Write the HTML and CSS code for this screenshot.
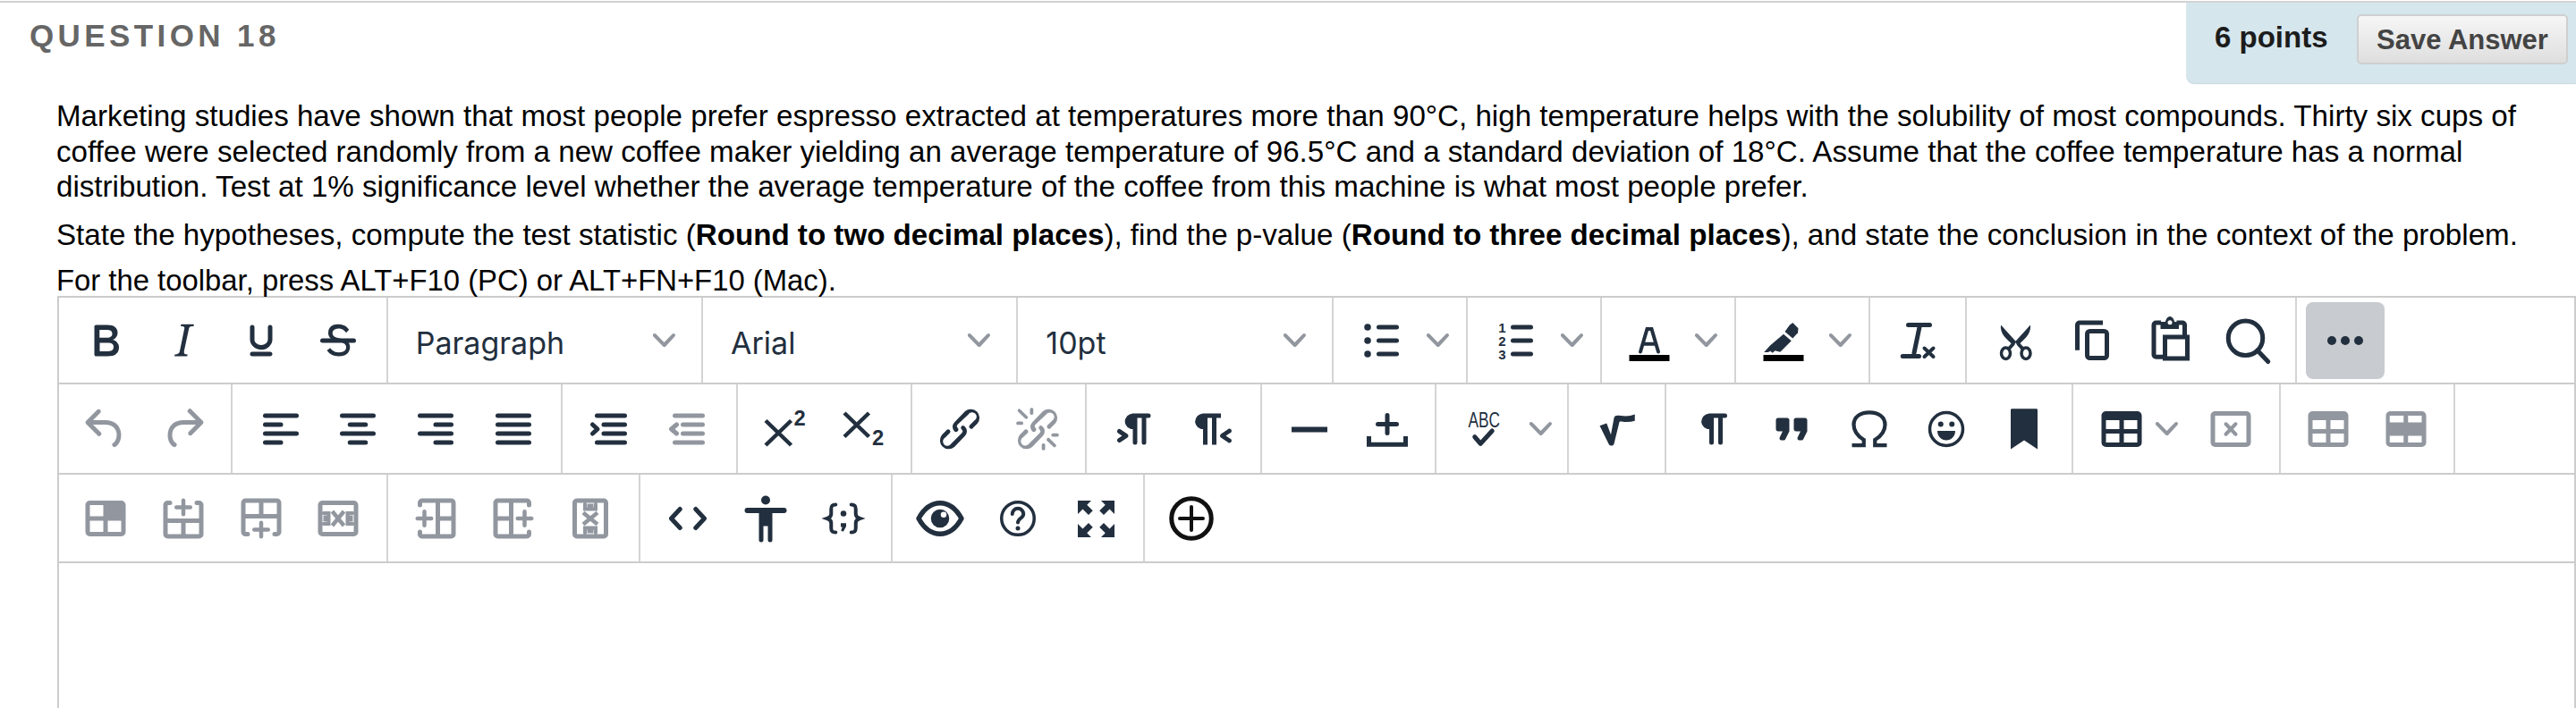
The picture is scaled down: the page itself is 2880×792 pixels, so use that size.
FILE: index.html
```html
<!DOCTYPE html>
<html lang="en">
<head>
  <meta charset="UTF-8">
  <title>Question 18</title>
  <link rel="stylesheet" href="styles.css">
</head>
<body>
  <svg class="defs" xmlns="http://www.w3.org/2000/svg">
    <symbol id="i-bold" viewBox="0 0 24 24"><path d="M7.8 19c-.3 0-.5 0-.6-.2l-.2-.5V5.7c0-.2 0-.4.2-.5l.6-.2h5c1.5 0 2.7.3 3.5 1 .7.6 1.1 1.4 1.1 2.5a3 3 0 01-.6 1.9c-.4.6-1 1-1.6 1.2.4.1.9.3 1.3.6s.8.7 1 1.2c.4.4.5 1 .5 1.6 0 1.3-.4 2.3-1.3 3-.8.7-2.1 1-3.8 1H7.8zm5-8.3c.6 0 1.2-.1 1.6-.5.4-.3.6-.7.6-1.3 0-1.1-.8-1.7-2.3-1.7H9.3v3.5h3.4zm.5 6c.7 0 1.3-.1 1.7-.4.4-.4.6-.9.6-1.5s-.2-1-.7-1.4c-.4-.3-1-.4-2-.4H9.4v3.8h4z" fill-rule="evenodd"/></symbol>
    <symbol id="i-italic" viewBox="0 0 24 24"><path d="M16.7 4.7l-.1.9h-.3c-.6 0-1 0-1.4.3-.3.3-.4.6-.5 1.1l-2.1 9.8v.6c0 .5.4.8 1.4.8h.2l-.2.8H8l.2-.8h.2c1.1 0 1.8-.5 2-1.5l2-9.8.1-.5c0-.6-.4-.8-1.4-.8h-.3l.2-.9h5.8z"/></symbol>
    <symbol id="i-underline" viewBox="0 0 24 24"><path d="M16 5c.6 0 1 .4 1 1v5.5a4 4 0 01-.4 1.8l-1 1.4a5.3 5.3 0 01-5.5 1 5 5 0 01-1.6-1c-.5-.4-.8-.9-1.1-1.4a4 4 0 01-.4-1.8V6c0-.6.4-1 1-1s1 .4 1 1v5.5c0 .3 0 .6.2 1l.6.7a3.3 3.3 0 002.2.8 3.4 3.4 0 002.2-.8c.3-.2.4-.5.6-.8l.2-.9V6c0-.6.4-1 1-1zM8 17h8c.6 0 1 .4 1 1s-.4 1-1 1H8a1 1 0 010-2z"/></symbol>
    <symbol id="i-strike" viewBox="0 0 24 24"><path d="M15.6 8.5c-.5-.7-1-1.1-1.3-1.3-.6-.4-1.3-.6-2-.6-2.7 0-2.8 1.7-2.8 2.1 0 1.6 1.8 2 3.2 2.3 4.4.9 4.6 2.8 4.6 3.9 0 1.4-.7 4.1-5 4.1A6.2 6.2 0 017 16.4l1.5-1.1c.4.6 1.6 2 3.7 2 1.6 0 2.5-.4 3-1 .3-.4.4-.9.4-1.4 0-.8-.4-2-4-2.6C9.6 11.8 7.6 11 7.6 8.6c0-3.8 3.5-3.9 4.5-3.9 1.7 0 3 .6 3.6 1.1l1.2 1.3-1.3 1.4z"/><path d="M5 11h14a1 1 0 010 2H5a1 1 0 010-2z"/></symbol>
    <symbol id="i-chevron" viewBox="0 0 10 10"><path d="M8.7 2.2c.3-.3.8-.3 1 0 .4.4.4.9 0 1.2L5.7 7.8c-.3.3-.9.3-1.2 0L.2 3.4a.8.8 0 010-1.2c.3-.3.8-.3 1.1 0L5 6l3.7-3.8z"/></symbol>
    <symbol id="i-bullist" viewBox="0 0 24 24"><g class="ln"><path d="M11 6h8M11 12h8M11 18h8"/></g><circle cx="6" cy="6" r="1.5"/><circle cx="6" cy="12" r="1.5"/><circle cx="6" cy="18" r="1.5"/></symbol>
    <symbol id="i-textcolor" viewBox="0 0 24 24"><path class="ln-thin" d="M8 17l3-10.200h2l3 10.200M9.100 13.500h5.800"/><rect class="ink" x="3" y="18.400" width="18" height="2.800"/></symbol>
    <symbol id="i-highlight" viewBox="0 0 24 24"><path d="M14.700 5.100l1.400-1.100 2.500 2.500-.2 2-2.300 2.500-3.500-3z"/><path d="M12 9.100l3.500 3-5 5-2.300-.6-1.100 1-1-.8-1 .5H3.300l2.700-3z"/><rect class="ink" x="3" y="18.400" width="18" height="2.800"/></symbol>
    <symbol id="i-removeformat" viewBox="0 0 24 24"><path class="ln" d="M7.800 5h9.600M13 5l-2.600 12.500M5.300 19h7.300"/><path class="ln-thin" d="M15 15.400l4 3.800M19 15.400l-4 3.800"/></symbol>
    <symbol id="i-cut" viewBox="0 0 24 24"><path d="M5.600 5l6.900 7.600-1.400 1.500C8.400 11.500 5 9 5.600 5zM18.800 5c.5 4-2.800 6.500-5.500 9.100l-1.400-1.500z"/><path class="ln-thin" d="M9.300 15.500l1.800-2M15.200 15.500l-1.800-2"/><ellipse class="ring-th" cx="7.800" cy="17.700" rx="2" ry="2.500"/><ellipse class="ring-th" cx="16.800" cy="17.700" rx="2" ry="2.500"/></symbol>
    <symbol id="i-copy" viewBox="0 0 24 24"><path class="ln-sq" d="M16.800 4H6.400a1 1 0 00-1 1v11.300"/><rect class="ring" x="9.800" y="7.800" width="8.800" height="12" rx="1.200"/></symbol>
    <symbol id="i-paste" viewBox="0 0 24 24"><path class="ln-sq" d="M8 4H5.800a1 1 0 00-1 1v13.300a1 1 0 001 1H9M15 4h2.600a1 1 0 011 1v5"/><path d="M7.800 6.800V3.600h2.200c.2-1.600 1.400-2.400 2-2.400s1.800.8 2 2.400h2v3.200z"/><circle class="hole" cx="12" cy="3.900" r="1"/><rect class="ln-sq" x="9.800" y="10.400" width="10" height="9.600"/></symbol>
    <symbol id="i-search" viewBox="0 0 24 24"><circle class="ring" cx="11" cy="10.900" r="7.700"/><path class="ln" d="M16.300 16.400l4.800 5"/></symbol>
    <symbol id="i-more" viewBox="0 0 24 24"><circle cx="6" cy="12" r="2"/><circle cx="12" cy="12" r="2"/><circle cx="18" cy="12" r="2"/></symbol>
    <symbol id="i-undo" viewBox="0 0 24 24"><path d="M6.400 8H12c3.700 0 6.200 2 6.800 5.100.6 2.700-.4 5.600-2.300 6.800a1 1 0 01-1-1.800c1.100-.7 1.800-2.700 1.400-4.600-.5-2.100-2.100-3.500-4.900-3.500H6.400l3.300 3.300a1 1 0 11-1.400 1.400l-5-5a1 1 0 010-1.400l5-5a1 1 0 011.400 1.400L6.400 8z"/></symbol>
    <symbol id="i-redo" viewBox="0 0 24 24"><path d="M17.600 10H12c-2.800 0-4.400 1.400-4.900 3.500-.4 2 .3 3.900 1.400 4.600a1 1 0 11-1 1.800c-2-1.200-2.900-4.100-2.300-6.800.6-3 3-5.100 6.800-5.100h5.600l-3.300-3.300a1 1 0 111.400-1.400l5 5a1 1 0 010 1.400l-5 5a1 1 0 01-1.400-1.400l3.300-3.300z"/></symbol>
    <symbol id="i-alignleft" viewBox="0 0 24 24"><path class="ln" d="M5 6h14M5 10h7M5 14h14M5 18h7"/></symbol>
    <symbol id="i-aligncenter" viewBox="0 0 24 24"><path class="ln" d="M5 6h14M8.500 10h7M5 14h14M8.500 18h7"/></symbol>
    <symbol id="i-alignright" viewBox="0 0 24 24"><path class="ln" d="M5 6h14M12 10h7M5 14h14M12 18h7"/></symbol>
    <symbol id="i-justify" viewBox="0 0 24 24"><path class="ln" d="M5 6h14M5 10h14M5 14h14M5 18h14"/></symbol>
    <symbol id="i-indent" viewBox="0 0 24 24"><path class="ln" d="M6.200 6h12.400M9.200 10h9.400M9.200 14h9.400M6.200 18h12.400M4.200 10l2.200 2-2.200 2"/></symbol>
    <symbol id="i-outdent" viewBox="0 0 24 24"><path class="ln" d="M6.200 6h12.400M9.800 10h8.800M9.800 14h8.800M6.200 18h12.400M7 10l-2.400 2L7 14"/></symbol>
    <symbol id="i-link" viewBox="0 0 24 24"><path d="M6.200 12.300a1 1 0 011.400 1.400l-2 2a2 2 0 102.600 2.800l4.800-4.800a1 1 0 000-1.400 1 1 0 111.400-1.300 2.900 2.900 0 010 4L9.600 20a3.900 3.900 0 01-5.500-5.500l2-2zm11.600-.6a1 1 0 01-1.400-1.400l2-2a2 2 0 10-2.600-2.800L11 10a1 1 0 000 1.400A1 1 0 119.600 13a2.900 2.900 0 010-4L14.400 4a3.900 3.900 0 015.500 5.500l-2 2z"/></symbol>
    <symbol id="i-unlink" viewBox="0 0 24 24"><path d="M6.200 12.300a1 1 0 011.400 1.400l-2.100 2a2 2 0 102.700 2.800l4.800-4.800a1 1 0 000-1.400 1 1 0 111.400-1.300 2.900 2.900 0 010 4L9.600 20a3.900 3.900 0 01-5.500-5.500l2-2zm11.600-.6a1 1 0 01-1.400-1.400l2.100-2a2 2 0 10-2.700-2.800L11 10a1 1 0 000 1.400A1 1 0 119.600 13a2.900 2.900 0 010-4L14.400 4a3.900 3.900 0 015.500 5.500l-2 2zM7.600 6.300a.8.8 0 01-1 1.100L3.300 4.200a.7.7 0 111-1l3.200 3.100zM5.100 8.600a.8.8 0 010 1.500H3a.8.8 0 010-1.500H5zm5-3.500a.8.8 0 01-1.500 0V3a.8.8 0 011.500 0v2zm6 11.800a.8.8 0 011-1l3.200 3.200a.8.8 0 01-1 1L16 17zm-2.200 2a.8.8 0 011.500 0V21a.8.8 0 01-1.500 0V19zm5-3.500a.7.7 0 110-1.500H21a.8.8 0 010 1.500H19z"/></symbol>
    <symbol id="i-ltr" viewBox="0 0 24 24"><path d="M11 5h7a1 1 0 010 2h-1v11a1 1 0 01-2 0V7h-2v11a1 1 0 01-2 0v-6c-.5 0-1 0-1.400-.3A3.400 3.400 0 017.800 10a3.300 3.300 0 010-2.800 3.400 3.400 0 011.800-1.800L11 5zM4.400 16.200L6.200 15l-1.800-1.200a1 1 0 011.200-1.600l3 2a1 1 0 010 1.600l-3 2a1 1 0 11-1.200-1.600z"/></symbol>
    <symbol id="i-rtl" viewBox="0 0 24 24"><path d="M8 5h8v2h-2v12h-2V7h-2v12H8v-7c-.5 0-1 0-1.400-.3A3.400 3.400 0 014.800 10a3.300 3.300 0 010-2.800 3.400 3.400 0 011.800-1.800L8 5zm12 11.200a1 1 0 11-1 1.600l-3-2a1 1 0 010-1.600l3-2a1 1 0 111 1.600L18.200 15l1.800 1.200z"/></symbol>
    <symbol id="i-hr" viewBox="0 0 24 24"><path d="M4 11h16v2.400H4z"/></symbol>
    <symbol id="i-pagebreak" viewBox="0 0 24 24"><path class="ln" d="M12 5.800v8M7.800 9.800h8.400"/><path class="ln-sq" d="M3.800 15.200v3.700h16.400v-3.700"/></symbol>
    <symbol id="i-sqrt" viewBox="0 0 24 24"><path d="M4.200 10.500l3.100-1.100 1.900 5.100 1.400-7.500c.3-1.200 1.400-1.200 2.900-1 2.500.3 4.500.2 6.400-.6v2.900c-1.900.6-3.900.7-5.900.3-.7-.1-1-.1-1.100.6l-2.300 9.400c-.3 1.100-2 1.100-2.400 0z"/></symbol>
    <symbol id="i-para" viewBox="0 0 24 24"><path d="M10 5h7a1 1 0 010 2h-1v11a1 1 0 01-2 0V7h-2v11a1 1 0 01-2 0v-6c-.5 0-1 0-1.400-.3A3.400 3.400 0 016.800 10a3.300 3.300 0 010-2.800 3.400 3.400 0 011.800-1.800L10 5z"/></symbol>
    <symbol id="i-quote" viewBox="0 0 24 24"><path d="M7.500 17h.9c.4 0 .7-.2.9-.6L11 13V8c0-.6-.4-1-1-1H6a1 1 0 00-1 1v4c0 .6.400 1 1 1h2l-1.300 2.700a1 1 0 00.8 1.300zm8 0h.9c.4 0 .7-.2.9-.6L19 13V8c0-.6-.4-1-1-1h-4a1 1 0 00-1 1v4c0 .6.400 1 1 1h2l-1.300 2.700a1 1 0 00.8 1.300z"/></symbol>
    <symbol id="i-omega" viewBox="0 0 24 24"><path class="ln-om" d="M4.200 19.200h5.300v-2.400C6.500 15 5 12.500 5 10c0-3.500 3-5.500 7-5.500s7 2 7 5.500c0 2.500-1.500 5-4.500 6.800v2.400h5.300"/></symbol>
    <symbol id="i-emoji" viewBox="0 0 24 24"><circle class="ring-th" cx="12" cy="12" r="7.400"/><circle cx="9.500" cy="9.800" r="1.200"/><circle cx="14.500" cy="9.800" r="1.200"/><path d="M8 12.800h8c0 2.500-1.800 4.200-4 4.200s-4-1.700-4-4.200z"/></symbol>
    <symbol id="i-bookmark" viewBox="0 0 24 24"><path d="M6 3.500v17.500l6-4 6 4V3.500c0-.4-.200-.6-.6-.6H6.600c-.4 0-.6.200-.6.600z"/></symbol>
    <symbol id="i-table" viewBox="0 0 24 24"><path d="M19 4a2 2 0 012 2v12a2 2 0 01-2 2H5a2 2 0 01-2-2V6c0-1.100.9-2 2-2h14zM5 14v4h6v-4H5zm14 0h-6v4h6v-4zm0-6h-6v4h6V8zM5 12h6V8H5v4z" fill-rule="evenodd"/></symbol>
    <symbol id="i-tabledel" viewBox="0 0 24 24"><path d="M19 4a2 2 0 012 2v12a2 2 0 01-2 2H5a2 2 0 01-2-2V6c0-1.100.9-2 2-2h14zM5 6v12h14V6H5z" fill-rule="evenodd"/><path class="ln-thin" d="M9.800 9.700l4.400 4.600M14.200 9.700l-4.400 4.600"/></symbol>
    <symbol id="i-rowprops" viewBox="0 0 24 24"><path d="M19 4a2 2 0 012 2v12a2 2 0 01-2 2H5a2 2 0 01-2-2V6c0-1.100.9-2 2-2h14zM4.700 15v3h6.200v-3zm8.200 0v3H19v-3zm0-9v3H19V6zM4.700 6v3h6.200V6z" fill-rule="evenodd"/></symbol>
    <symbol id="i-cellprops" viewBox="0 0 24 24"><path d="M19 4a2 2 0 012 2v12a2 2 0 01-2 2H5a2 2 0 01-2-2V6c0-1.100.9-2 2-2h14zM5 13v5h6v-5zm8 0v5h6v-5zM5 6v5h6V6z" fill-rule="evenodd"/></symbol>
    <symbol id="i-rowabove" viewBox="0 0 24 24"><path d="M6 4a1 1 0 110 2H5v6h14V6h-1a1 1 0 010-2h1a2 2 0 012 2v13a2 2 0 01-2 2H5a2 2 0 01-2-2V6c0-1.100.9-2 2-2h1zm5 10H5v5h6v-5zm8 0h-6v5h6v-5zM12 3c.5 0 .9.4.9.9v2.200h2.200a.9.9 0 010 1.800h-2.200v2.200a.9.9 0 01-1.800 0V7.900H8.900a.9.9 0 010-1.800h2.200V3.900c0-.5.4-.9.9-.9z" fill-rule="evenodd"/></symbol>
    <symbol id="i-rowbelow" viewBox="0 0 24 24"><use href="#i-rowabove" width="24" height="24" transform="matrix(1 0 0 -1 0 24)"/></symbol>
    <symbol id="i-rowdel" viewBox="0 0 24 24"><path d="M19 4a2 2 0 012 2v12a2 2 0 01-2 2H5a2 2 0 01-2-2V6c0-1.100.9-2 2-2h14zM5 6v12h14V6H5z" fill-rule="evenodd"/><path class="ln-x" d="M9.400 8.800l5.200 6.400M14.600 8.800l-5.200 6.400"/><path class="ln-thin" d="M5.500 9.600h2.300v1.800H6.200v1.200h1.600v1.800H5.500M18.500 9.600h-2.300v1.800h1.600v1.200h-1.600v1.800h2.300"/></symbol>
    <symbol id="i-colleft" viewBox="0 0 24 24"><use href="#i-rowabove" width="24" height="24" transform="rotate(-90 12 12)"/></symbol>
    <symbol id="i-colright" viewBox="0 0 24 24"><use href="#i-rowabove" width="24" height="24" transform="rotate(90 12 12)"/></symbol>
    <symbol id="i-coldel" viewBox="0 0 24 24"><use href="#i-rowdel" width="24" height="24" transform="rotate(90 12 12)"/></symbol>
    <symbol id="i-code" viewBox="0 0 24 24"><path class="ln" d="M8.500 7.800L4.600 12l3.900 4.200M15.500 7.800l3.900 4.200-3.900 4.200"/></symbol>
    <symbol id="i-a11y" viewBox="0 0 24 24"><path d="M12 1.800a2 2 0 110 4 2 2 0 010-4zM3.800 7.200h16.400a1.200 1.200 0 010 2.400H15v12a1 1 0 01-2 0v-6.200h-2v6.200a1 1 0 01-2 0v-12H3.800a1.200 1.200 0 010-2.400z"/></symbol>
    <symbol id="i-template" viewBox="0 0 24 24"><path class="ln-thin" d="M8.500 5.800c-1.500 0-2 .6-2 2V10c0 1-.6 1.600-1.800 2 1.200.4 1.800 1 1.800 2v2.200c0 1.400.5 2 2 2M15.500 5.800c1.500 0 2 .6 2 2V10c0 1 .6 1.600 1.800 2-1.200.4-1.800 1-1.800 2v2.200c0 1.400-.5 2-2 2"/><circle cx="12" cy="9.800" r="1.300"/><path d="M10.800 14.100h2.400v1.500l-1.300 2.300-1-.5.600-1.600h-.7z"/></symbol>
    <symbol id="i-eye" viewBox="0 0 24 24"><path class="ln-eye" d="M2.400 12C5 7.300 8 5.100 12 5.100s7 2.200 9.600 6.900C19 16.700 16 18.900 12 18.900S5 16.700 2.400 12z"/><circle cx="12" cy="12" r="4.100"/><circle class="hole" cx="13.600" cy="10.300" r="1.300"/></symbol>
    <symbol id="i-help" viewBox="0 0 24 24"><circle class="ring-th" cx="12" cy="12" r="7.300"/><path class="ln-thin" d="M9.500 10a2.500 2.500 0 115 0c0 1.800-2.500 2-2.500 3.800"/><circle cx="12" cy="16.400" r="1"/></symbol>
    <symbol id="i-fullscreen" viewBox="0 0 24 24"><g id="fs-corner"><path d="M4 4h6L8.100 5.900l2.600 2.600-1.900 1.900-2.600-2.600L4 10z"/></g><use href="#fs-corner" transform="matrix(-1 0 0 1 24.400 0)"/><use href="#fs-corner" transform="matrix(1 0 0 -1 0 24.400)"/><use href="#fs-corner" transform="matrix(-1 0 0 -1 24.400 24.400)"/></symbol>
    <symbol id="i-plus" viewBox="0 0 24 24"><circle class="ring" cx="12" cy="12" r="8.900"/><path class="ln-thin" d="M12 6.800v10.400M6.800 12h10.400"/></symbol>
  </svg>

  <div class="page">
    <header class="q-head">
      <h2 class="q-title">QUESTION 18</h2>
      <div class="q-points">
        <span class="points">6 points</span>
        <button class="save" type="button">Save Answer</button>
      </div>
    </header>

    <div class="q-body">
      <p class="q-text">Marketing studies have shown that most people prefer espresso extracted at temperatures more than 90°C, high temperature helps with the solubility of most compounds. Thirty six cups of coffee were selected randomly from a new coffee maker yielding an average temperature of 96.5°C and a standard deviation of 18°C. Assume that the coffee temperature has a normal distribution. Test at 1% significance level whether the average temperature of the coffee from this machine is what most people prefer.</p>
      <p class="q-text q-second">State the hypotheses, compute the test statistic (<b>Round to two decimal places</b>), find the p-value (<b>Round to three decimal places</b>), and state the conclusion in the context of the problem.</p>
      <p class="q-note">For the toolbar, press ALT+F10 (PC) or ALT+FN+F10 (Mac).</p>
    </div>

    <div class="editor">
      <div class="tb-row row-1">
        <div class="tb-group">
          <button class="tb"><svg class="ic"><use href="#i-bold"/></svg></button>
          <button class="tb"><svg class="ic"><use href="#i-italic"/></svg></button>
          <button class="tb"><svg class="ic"><use href="#i-underline"/></svg></button>
          <button class="tb"><svg class="ic"><use href="#i-strike"/></svg></button>
        </div>
        <div class="tb-group sel-group">
          <button class="sel"><span>Paragraph</span><svg class="chev"><use href="#i-chevron"/></svg></button>
        </div>
        <div class="tb-group sel-group">
          <button class="sel"><span>Arial</span><svg class="chev"><use href="#i-chevron"/></svg></button>
        </div>
        <div class="tb-group sel-group">
          <button class="sel"><span>10pt</span><svg class="chev"><use href="#i-chevron"/></svg></button>
        </div>
        <div class="tb-group">
          <button class="tb"><svg class="ic"><use href="#i-bullist"/></svg></button>
          <button class="tb-drop"><svg class="chev"><use href="#i-chevron"/></svg></button>
        </div>
        <div class="tb-group">
          <button class="tb">
            <svg class="ic" viewBox="0 0 24 24"><path class="ln" d="M11 6h8M11 12h8M11 18h8"/><text class="ic-num" x="4.500" y="8.400">1</text><text class="ic-num" x="4.500" y="14.400">2</text><text class="ic-num" x="4.500" y="20.400">3</text></svg>
          </button>
          <button class="tb-drop"><svg class="chev"><use href="#i-chevron"/></svg></button>
        </div>
        <div class="tb-group">
          <button class="tb"><svg class="ic"><use href="#i-textcolor"/></svg></button>
          <button class="tb-drop"><svg class="chev"><use href="#i-chevron"/></svg></button>
        </div>
        <div class="tb-group">
          <button class="tb"><svg class="ic"><use href="#i-highlight"/></svg></button>
          <button class="tb-drop"><svg class="chev"><use href="#i-chevron"/></svg></button>
        </div>
        <div class="tb-group">
          <button class="tb"><svg class="ic"><use href="#i-removeformat"/></svg></button>
        </div>
        <div class="tb-group">
          <button class="tb"><svg class="ic"><use href="#i-cut"/></svg></button>
          <button class="tb"><svg class="ic"><use href="#i-copy"/></svg></button>
          <button class="tb"><svg class="ic"><use href="#i-paste"/></svg></button>
          <button class="tb"><svg class="ic"><use href="#i-search"/></svg></button>
        </div>
        <div class="tb-group no-line">
          <button class="tb active"><svg class="ic"><use href="#i-more"/></svg></button>
        </div>
      </div>

      <div class="tb-row row-2">
        <div class="tb-group">
          <button class="tb off"><svg class="ic"><use href="#i-undo"/></svg></button>
          <button class="tb off"><svg class="ic"><use href="#i-redo"/></svg></button>
        </div>
        <div class="tb-group">
          <button class="tb"><svg class="ic"><use href="#i-alignleft"/></svg></button>
          <button class="tb"><svg class="ic"><use href="#i-aligncenter"/></svg></button>
          <button class="tb"><svg class="ic"><use href="#i-alignright"/></svg></button>
          <button class="tb"><svg class="ic"><use href="#i-justify"/></svg></button>
        </div>
        <div class="tb-group">
          <button class="tb"><svg class="ic"><use href="#i-indent"/></svg></button>
          <button class="tb off"><svg class="ic"><use href="#i-outdent"/></svg></button>
        </div>
        <div class="tb-group">
          <button class="tb">
            <svg class="ic" viewBox="0 0 24 24"><path class="ln-x" d="M3.200 8.200l11.400 11M14.600 8.200L3.200 19.200"/><text class="ic-idx" x="15.800" y="10.400">2</text></svg>
          </button>
          <button class="tb">
            <svg class="ic" viewBox="0 0 24 24"><path class="ln-x" d="M3.600 4.800l11 10.600M14.600 4.800l-11 10.600"/><text class="ic-idx" x="16" y="19.200">2</text></svg>
          </button>
        </div>
        <div class="tb-group">
          <button class="tb"><svg class="ic"><use href="#i-link"/></svg></button>
          <button class="tb off"><svg class="ic"><use href="#i-unlink"/></svg></button>
        </div>
        <div class="tb-group">
          <button class="tb"><svg class="ic"><use href="#i-ltr"/></svg></button>
          <button class="tb"><svg class="ic"><use href="#i-rtl"/></svg></button>
        </div>
        <div class="tb-group">
          <button class="tb"><svg class="ic"><use href="#i-hr"/></svg></button>
          <button class="tb"><svg class="ic"><use href="#i-pagebreak"/></svg></button>
        </div>
        <div class="tb-group">
          <button class="tb">
            <svg class="ic" viewBox="0 0 24 24"><text class="ic-abc" x="5" y="11" textLength="14.200" lengthAdjust="spacingAndGlyphs">ABC</text><path class="ln" d="M7.900 15.500l2.600 3 5.200-5.700"/></svg>
          </button>
          <button class="tb-drop spell-drop"><svg class="chev"><use href="#i-chevron"/></svg></button>
        </div>
        <div class="tb-group">
          <button class="tb"><svg class="ic"><use href="#i-sqrt"/></svg></button>
        </div>
        <div class="tb-group">
          <button class="tb"><svg class="ic"><use href="#i-para"/></svg></button>
          <button class="tb"><svg class="ic"><use href="#i-quote"/></svg></button>
          <button class="tb"><svg class="ic"><use href="#i-omega"/></svg></button>
          <button class="tb"><svg class="ic"><use href="#i-emoji"/></svg></button>
          <button class="tb"><svg class="ic"><use href="#i-bookmark"/></svg></button>
        </div>
        <div class="tb-group">
          <button class="tb"><svg class="ic"><use href="#i-table"/></svg></button>
          <button class="tb-drop table-drop"><svg class="chev"><use href="#i-chevron"/></svg></button>
          <button class="tb off table-del"><svg class="ic"><use href="#i-tabledel"/></svg></button>
        </div>
        <div class="tb-group">
          <button class="tb off"><svg class="ic"><use href="#i-table"/></svg></button>
          <button class="tb off"><svg class="ic"><use href="#i-rowprops"/></svg></button>
        </div>
      </div>

      <div class="tb-row row-3">
        <div class="tb-group">
          <button class="tb off"><svg class="ic"><use href="#i-cellprops"/></svg></button>
          <button class="tb off"><svg class="ic"><use href="#i-rowabove"/></svg></button>
          <button class="tb off"><svg class="ic"><use href="#i-rowbelow"/></svg></button>
          <button class="tb off"><svg class="ic"><use href="#i-rowdel"/></svg></button>
        </div>
        <div class="tb-group">
          <button class="tb off"><svg class="ic"><use href="#i-colleft"/></svg></button>
          <button class="tb off"><svg class="ic"><use href="#i-colright"/></svg></button>
          <button class="tb off"><svg class="ic"><use href="#i-coldel"/></svg></button>
        </div>
        <div class="tb-group">
          <button class="tb"><svg class="ic"><use href="#i-code"/></svg></button>
          <button class="tb"><svg class="ic"><use href="#i-a11y"/></svg></button>
          <button class="tb"><svg class="ic"><use href="#i-template"/></svg></button>
        </div>
        <div class="tb-group">
          <button class="tb"><svg class="ic"><use href="#i-eye"/></svg></button>
          <button class="tb"><svg class="ic"><use href="#i-help"/></svg></button>
          <button class="tb"><svg class="ic"><use href="#i-fullscreen"/></svg></button>
        </div>
        <div class="tb-group no-line">
          <button class="tb plus"><svg class="ic"><use href="#i-plus"/></svg></button>
        </div>
      </div>

      <div class="edit-area"></div>
    </div>
  </div>
</body>
</html>
```

FILE: styles.css
```css
html, body {
  margin: 0;
  height: 792px;
  overflow: hidden;
  background: #fff;
}
body {
  font-family: "Liberation Sans", Arial, sans-serif;
  color: #000;
}
.defs {
  width: 0;
  height: 0;
  position: absolute;
}
.page {
  padding-top: 1px;
}

/* question header */
.q-head {
  display: flex;
  justify-content: space-between;
  align-items: flex-start;
  height: 90px;
  border-top: 2px solid #d2d2d2;
}
.q-title {
  margin: 17px 0 0 33px;
  font-size: 35px;
  line-height: 40px;
  letter-spacing: 4.4px;
  color: #666;
}
.q-points {
  display: flex;
  align-items: flex-start;
  box-sizing: border-box;
  width: 435px;
  height: 90px;
  padding: 13px 9px 0 31px;
  background: #d5e6ed;
  border-bottom-left-radius: 8px;
  box-shadow: 0 1px 1px #c3d6de, -1px 0 1px #dbe7ec;
}
.points {
  width: 159px;
  font-size: 33px;
  line-height: 52px;
  font-weight: bold;
  color: #1c1c1c;
}
.save {
  width: 236px;
  height: 56px;
  padding: 2px 0 0;
  border: 2px solid #cfcfcf;
  border-radius: 5px;
  background: linear-gradient(#f6f6f6, #dedede);
  font-family: inherit;
  font-size: 31px;
  font-weight: bold;
  color: #444;
}

/* question text */
.q-body {
  padding: 17px 0 0 63px;
  width: 2770px;
  font-size: 33.15px;
  line-height: 39.5px;
}
.q-text {
  margin: 0;
}
.q-second {
  margin-top: 14.5px;
}
.q-note {
  margin: 11.5px 0 0;
  height: 37px;
  font-size: 32.85px;
}

/* editor */
.editor {
  margin-left: 64px;
  border: solid #ccc;
  border-width: 2px 2px 0 2px;
}
.tb-row {
  display: flex;
  box-sizing: border-box;
  border-bottom: 2px solid #ccc;
}
.row-1 { height: 97px; }
.row-2 { height: 101px; }
.row-3 { height: 99px; }
.tb-group {
  display: flex;
  flex: none;
  align-items: center;
  padding: 0 10px;
  border-right: 2px solid #d4d4d4;
}
.tb-group:first-child {
  padding-left: 9px;
}
.no-line {
  border-right: 0;
}
.tb {
  display: flex;
  flex: none;
  align-items: center;
  justify-content: center;
  width: 86.7px;
  height: 86px;
  padding: 0;
  border: 0;
  border-radius: 8px;
  background: none;
  color: #222f3e;
  fill: currentColor;
}
.ic {
  width: 60px;
  height: 60px;
}
.off {
  color: #92979f;
}
.active {
  width: 88px;
  background: #c8cbcf;
}
.plus {
  margin-left: -1px;
  color: #111;
}
.chev {
  flex: none;
  width: 25px;
  height: 25px;
  fill: #92979f;
}
.tb-drop {
  display: flex;
  flex: none;
  align-items: center;
  justify-content: center;
  width: 41.3px;
  height: 86px;
  padding: 0;
  border: 0;
  background: none;
}
.spell-drop {
  width: 39.5px;
}
.table-drop {
  width: 20px;
  margin-left: -3px;
}
.table-del {
  margin-left: 19px;
}
.sel-group {
  padding: 0 10px 0 0;
}
.sel {
  display: flex;
  align-items: center;
  justify-content: space-between;
  box-sizing: border-box;
  width: 340.3px;
  height: 86px;
  padding: 0 19px 0 31px;
  border: 0;
  background: none;
  font-family: Inter, "Liberation Sans", sans-serif;
  font-size: 34px;
  color: #222f3e;
}
.sel span {
  position: relative;
  top: 3px;
}
.edit-area {
  height: 200px;
}

/* icon drawing */
.ln, .ln-thin, .ln-sq, .ln-x, .ln-om, .ln-eye, .ring, .ring-th {
  fill: none;
  stroke: currentColor;
}
.ln {
  stroke-width: 2;
  stroke-linecap: round;
  stroke-linejoin: round;
}
.ln-thin {
  stroke-width: 1.6;
  stroke-linecap: round;
}
.ln-sq, .ring {
  stroke-width: 2;
}
.ln-x {
  stroke-width: 1.8;
}
.ln-om {
  stroke-width: 1.7;
}
.ln-eye {
  stroke-width: 2.2;
  stroke-linejoin: round;
}
.ring-th {
  stroke-width: 1.4;
}
.ink {
  fill: #000;
}
.hole {
  fill: #fff;
}
.ic-num {
  font-family: "Liberation Sans", sans-serif;
  font-size: 6px;
  font-weight: bold;
}
.ic-idx {
  font-family: "Liberation Sans", sans-serif;
  font-size: 9.5px;
  font-weight: bold;
}
.ic-abc {
  font-family: "Liberation Sans", sans-serif;
  font-size: 9.5px;
}
```
